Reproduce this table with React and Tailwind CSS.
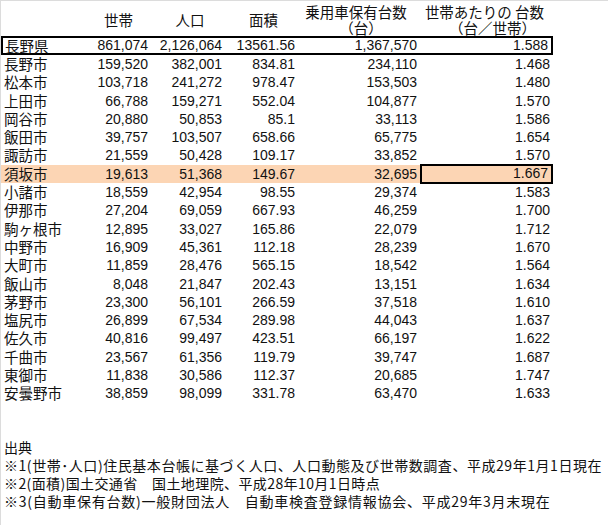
import React from "react";

const rows = [
  ["長野市", "159,520", "382,001", "834.81", "234,110", "1.468"],
  ["松本市", "103,718", "241,272", "978.47", "153,503", "1.480"],
  ["上田市", "66,788", "159,271", "552.04", "104,877", "1.570"],
  ["岡谷市", "20,880", "50,853", "85.1", "33,113", "1.586"],
  ["飯田市", "39,757", "103,507", "658.66", "65,775", "1.654"],
  ["諏訪市", "21,559", "50,428", "109.17", "33,852", "1.570"],
  ["須坂市", "19,613", "51,368", "149.67", "32,695", "1.667"],
  ["小諸市", "18,559", "42,954", "98.55", "29,374", "1.583"],
  ["伊那市", "27,204", "69,059", "667.93", "46,259", "1.700"],
  ["駒ヶ根市", "12,895", "33,027", "165.86", "22,079", "1.712"],
  ["中野市", "16,909", "45,361", "112.18", "28,239", "1.670"],
  ["大町市", "11,859", "28,476", "565.15", "18,542", "1.564"],
  ["飯山市", "8,048", "21,847", "202.43", "13,151", "1.634"],
  ["茅野市", "23,300", "56,101", "266.59", "37,518", "1.610"],
  ["塩尻市", "26,899", "67,534", "289.98", "44,043", "1.637"],
  ["佐久市", "40,816", "99,497", "423.51", "66,197", "1.622"],
  ["千曲市", "23,567", "61,356", "119.79", "39,747", "1.687"],
  ["東御市", "11,838", "30,586", "112.37", "20,685", "1.747"],
  ["安曇野市", "38,859", "98,099", "331.78", "63,470", "1.633"],
];

const jp = "font-['Noto_Sans_CJK_JP',sans-serif]";
const num = "font-['Liberation_Sans',Arial,sans-serif] text-[14px] text-right pr-[3px]";

const Row = ({ r }) => {
  const hot = r[0] === "須坂市";
  return (
    <div
      className={
        "grid grid-cols-[75px_75px_74px_73px_122px_133px] h-[18.3px] leading-[18.3px] " +
        (hot ? "bg-[#fcd5b4]" : "")
      }
    >
      <div className={jp + " text-[14.5px] pl-[3px] whitespace-nowrap"}>{r[0]}</div>
      <div className={num}>{r[1]}</div>
      <div className={num}>{r[2]}</div>
      <div className={num}>{r[3]}</div>
      <div className={num}>{r[4]}</div>
      <div
        className={
          num + (hot ? " border-2 border-black leading-[15px] -mt-[1px] h-[20px]" : "")
        }
      >
        {r[5]}
      </div>
    </div>
  );
};

export default function App() {
  return (
    <div className="w-[608px] h-[525px] bg-white text-[#111] border-l border-t border-[#dcdcdc] overflow-hidden">
      {/* header */}
      <div className={jp + " grid grid-cols-[75px_75px_74px_73px_122px_133px] h-[35px] text-[14.5px] leading-[16px]"}>
        <div />
        <div className="pt-[11px] text-center pl-[10px]">世帯</div>
        <div className="pt-[11px] text-center pl-[4px]">人口</div>
        <div className="pt-[11px] text-center pl-[4px]">面積</div>
        <div className="pt-[3px]">
          <div className="text-center pr-[6px] whitespace-nowrap">乗用車保有台数</div>
          <div className="text-center pl-[4px]">（台）</div>
        </div>
        <div className="pt-[3px]">
          <div className="text-center pr-[4px] whitespace-nowrap">世帯あたりの 台数</div>
          <div className="text-center pl-[12px] whitespace-nowrap">（台／世帯）</div>
        </div>
      </div>

      {/* prefecture total */}
      <div className="w-[552px] border-2 border-black h-[19px] grid grid-cols-[73px_75px_74px_73px_122px_131px] leading-[15px]">
        <div className={jp + " text-[14.5px] pl-[2px]"}>長野県</div>
        <div className={num}>861,074</div>
        <div className={num}>2,126,064</div>
        <div className={num}>13561.56</div>
        <div className={num}>1,367,570</div>
        <div className={num + " pr-[2px]"}>1.588</div>
      </div>

      <div className="w-[552px]">
        {rows.map((r) => (
          <Row key={r[0]} r={r} />
        ))}
      </div>

      <div className={jp + " mt-[35px] pl-[3px] text-[14px] leading-[18px] whitespace-nowrap"}>
        <div>出典</div>
        <div className="tracking-[0.55px]">※1(世帯･人口)住民基本台帳に基づく人口、人口動態及び世帯数調査、平成29年1月1日現在</div>
        <div className="tracking-[0.4px]">※2(面積)国土交通省　国土地理院、平成28年10月1日時点</div>
        <div className="tracking-[0.75px]">※3(自動車保有台数)一般財団法人　自動車検査登録情報協会、平成29年3月末現在</div>
      </div>
    </div>
  );
}
